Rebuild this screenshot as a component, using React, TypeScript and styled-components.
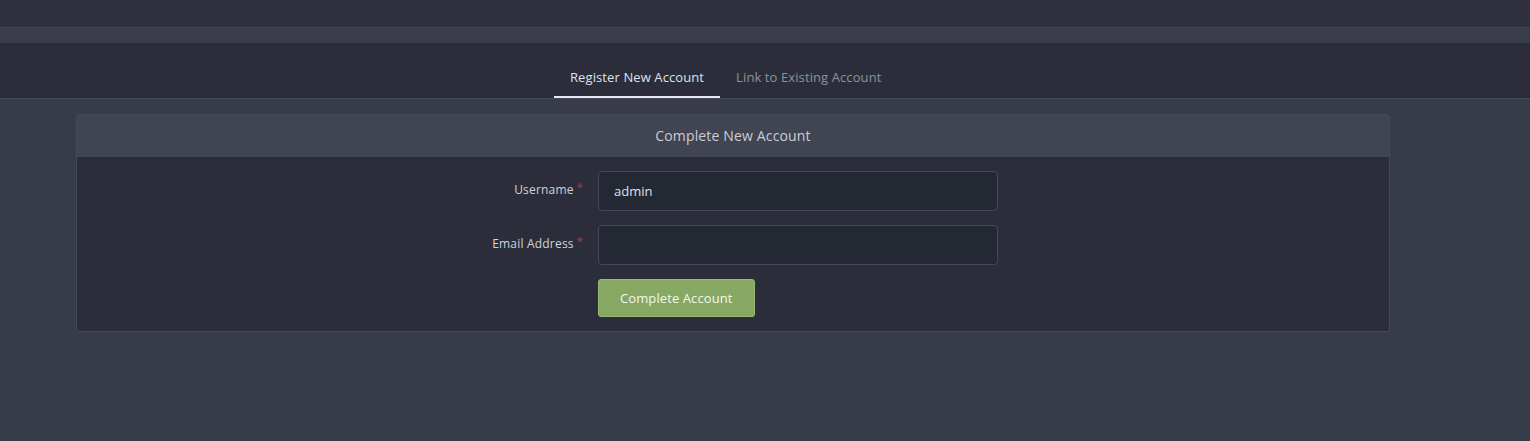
import styled, { createGlobalStyle } from "styled-components";

const GlobalStyle = createGlobalStyle`
  html, body {
    margin: 0;
    padding: 0;
    background: #383b48;
    font-family: "Open Sans", "Liberation Sans", sans-serif;
  }
  * {
    box-sizing: border-box;
  }
`;

const Page = styled.div`
  min-height: 441px;
  background: #383b48;
`;

const TopBar = styled.div`
  height: 28px;
  background: #2f323e;
  border-bottom: 1px solid #3f4250;
`;

const Strip = styled.div`
  height: 15px;
  background: #393c49;
`;

const TabBar = styled.nav`
  height: 56px;
  background: #2b2e3a;
  border-bottom: 1px solid #454856;
  display: flex;
  align-items: flex-end;
  padding-left: 554px;
`;

const Tab = styled.a<{ active?: boolean }>`
  display: block;
  padding: 0 16px;
  height: 40px;
  line-height: 38px;
  font-size: 13px;
  letter-spacing: 0.1px;
  color: ${(p) => (p.active ? "#dfe2ea" : "#8d929f")};
  border-bottom: 2px solid ${(p) => (p.active ? "#e6e8ee" : "transparent")};
  cursor: pointer;
  text-decoration: none;
`;

const Card = styled.section`
  margin: 15px 140px 0 76px;
  border: 1px solid #464a58;
  border-radius: 3px;
  background: #2b2e3a;
  overflow: hidden;
`;

const CardHeader = styled.header`
  height: 42px;
  line-height: 41px;
  text-align: center;
  background: #414552;
  color: #c9cdd6;
  font-size: 14px;
  letter-spacing: 0.15px;
`;

const CardBody = styled.div`
  padding: 14px 0 14px;
  display: grid;
  grid-template-columns: 513px 400px;
  column-gap: 8px;
  row-gap: 14px;
`;

const Label = styled.label`
  text-align: right;
  padding-top: 8px;
  padding-right: 7px;
  font-size: 12px;
  letter-spacing: 0.2px;
  color: #cfd3dc;
`;

const Required = styled.sup`
  color: #c0392b;
  font-size: 11px;
  margin-left: 3px;
  vertical-align: 3px;
`;

const Input = styled.input`
  height: 40px;
  width: 400px;
  background: #242833;
  border: 1px solid #444856;
  border-radius: 4px;
  padding: 0 15px;
  color: #dfe2ea;
  font-family: inherit;
  font-size: 13px;
  outline: none;
`;

const Spacer = styled.div``;

const Button = styled.button`
  justify-self: start;
  height: 38px;
  padding: 0 21px;
  background: #86a862;
  border: 1px solid #98b874;
  border-radius: 3px;
  color: #f4f7ef;
  font-family: inherit;
  font-size: 13px;
  letter-spacing: 0.1px;
  cursor: pointer;
`;

export default function App() {
  return (
    <Page>
      <GlobalStyle />
      <TopBar />
      <Strip />
      <TabBar>
        <Tab active>Register New Account</Tab>
        <Tab>Link to Existing Account</Tab>
      </TabBar>
      <Card>
        <CardHeader>Complete New Account</CardHeader>
        <CardBody>
          <Label>
            Username<Required>*</Required>
          </Label>
          <Input defaultValue="admin" />
          <Label>
            Email Address<Required>*</Required>
          </Label>
          <Input />
          <Spacer />
          <Button>Complete Account</Button>
        </CardBody>
      </Card>
    </Page>
  );
}
